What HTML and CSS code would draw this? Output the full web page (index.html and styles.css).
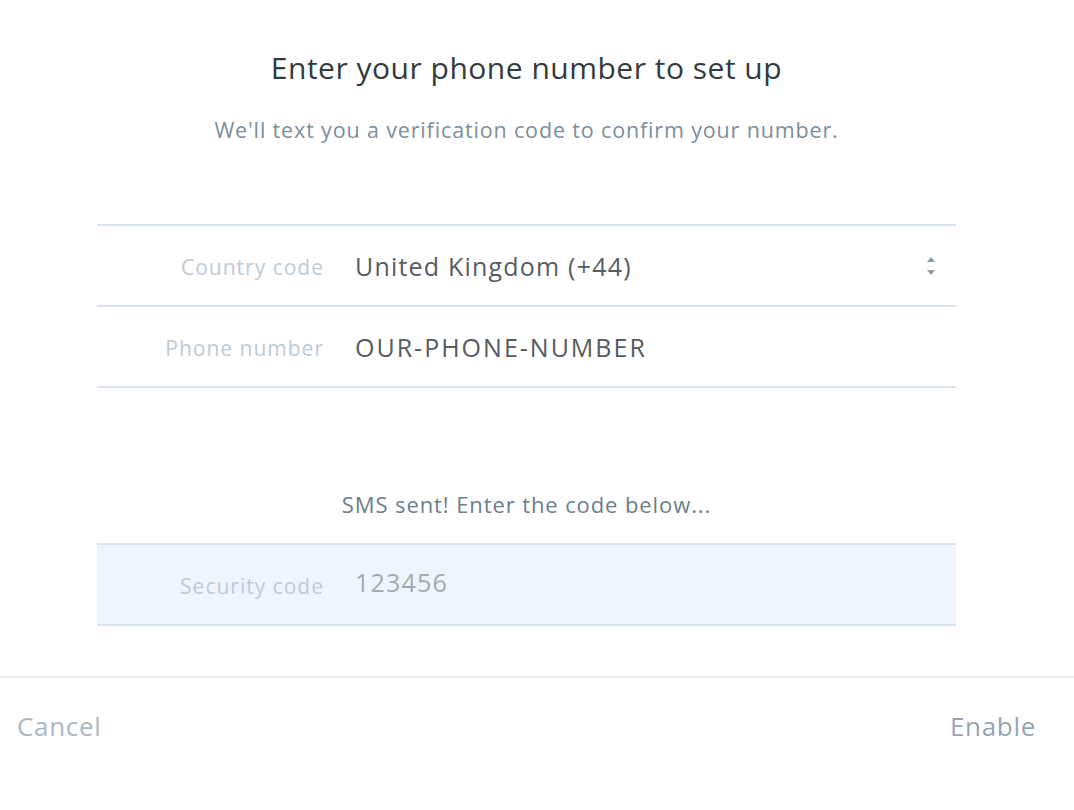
FILE: index.html
```html
<!DOCTYPE html>
<html>
<head>
<meta charset="utf-8">
<link rel="stylesheet" href="styles.css">
</head>
<body>
<div class="dialog">
  <div class="content">
    <h1 class="title">Enter your phone number to set up</h1>
    <p class="subtitle">We'll text you a verification code to confirm your number.</p>
    <div class="form">
      <div class="row">
        <div class="label">Country code</div>
        <div class="value">United Kingdom (+44)</div>
        <svg class="spinner" width="12" height="24" viewBox="0 0 12 24">
          <path d="M6 3 L10 8 L2 8 Z" fill="#8d9ba7"/>
          <path d="M6 21 L10 16 L2 16 Z" fill="#8d9ba7"/>
        </svg>
      </div>
      <div class="row">
        <div class="label">Phone number</div>
        <div class="value caps">OUR-PHONE-NUMBER</div>
      </div>
    </div>
    <p class="sms">SMS sent! Enter the code below...</p>
    <div class="form">
      <div class="row code">
        <div class="label">Security code</div>
        <div class="value placeholder">123456</div>
      </div>
    </div>
  </div>
  <div class="footer">
    <span class="btn">Cancel</span>
    <span class="btn">Enable</span>
  </div>
</div>
</body>
</html>
```

FILE: styles.css
```css
* { box-sizing: border-box; }
html, body { margin: 0; padding: 0; background: #fff; }
body { font-family: "Open Sans", Lato, sans-serif; width: 1074px; height: 810px; overflow: hidden; }
.dialog { display: flex; flex-direction: column; height: 810px; }
.content { padding: 48px 118px 0 97px; display: flex; flex-direction: column; align-items: stretch; }
.title { margin: 0; text-align: center; font-size: 30px; letter-spacing: 0.5px; font-weight: 400; color: #333a40; line-height: 40px; }
.subtitle { margin: 29px 0 0; text-align: center; font-size: 21.5px; letter-spacing: 0.85px; color: #7d8e9b; line-height: 26px; }
.form { display: flex; flex-direction: column; border-top: 2px solid #dae3eb; }
.content > .form:first-of-type { margin-top: 81px; }
.row { display: flex; align-items: center; height: 81px; border-bottom: 2px solid #dae3eb; position: relative; }
.label { width: 227px; text-align: right; font-size: 21px; letter-spacing: 1px; color: #bdcad6; padding-top: 2px; }
.value { margin-left: 31px; font-size: 25px; letter-spacing: 1.2px; color: #575c61; flex: 1; }
.caps { letter-spacing: 2px; }
.placeholder { color: #a3abb2; margin-top: -6px; }
.spinner { margin-right: 19px; }
.sms { margin: 102px 0 25px; text-align: center; font-size: 22px; letter-spacing: 0.9px; color: #6b7e8c; line-height: 28px; }
.code { background: #eef5fd; }
.footer { margin-top: 50px; border-top: 2px solid #e6edf3; display: flex; justify-content: space-between; padding: 30px 39px 0 17px; }
.btn { font-size: 26px; letter-spacing: 0.7px; color: #aab8c3; }
.btn:last-child { color: #95a6b3; margin-right: -1px; }
```
